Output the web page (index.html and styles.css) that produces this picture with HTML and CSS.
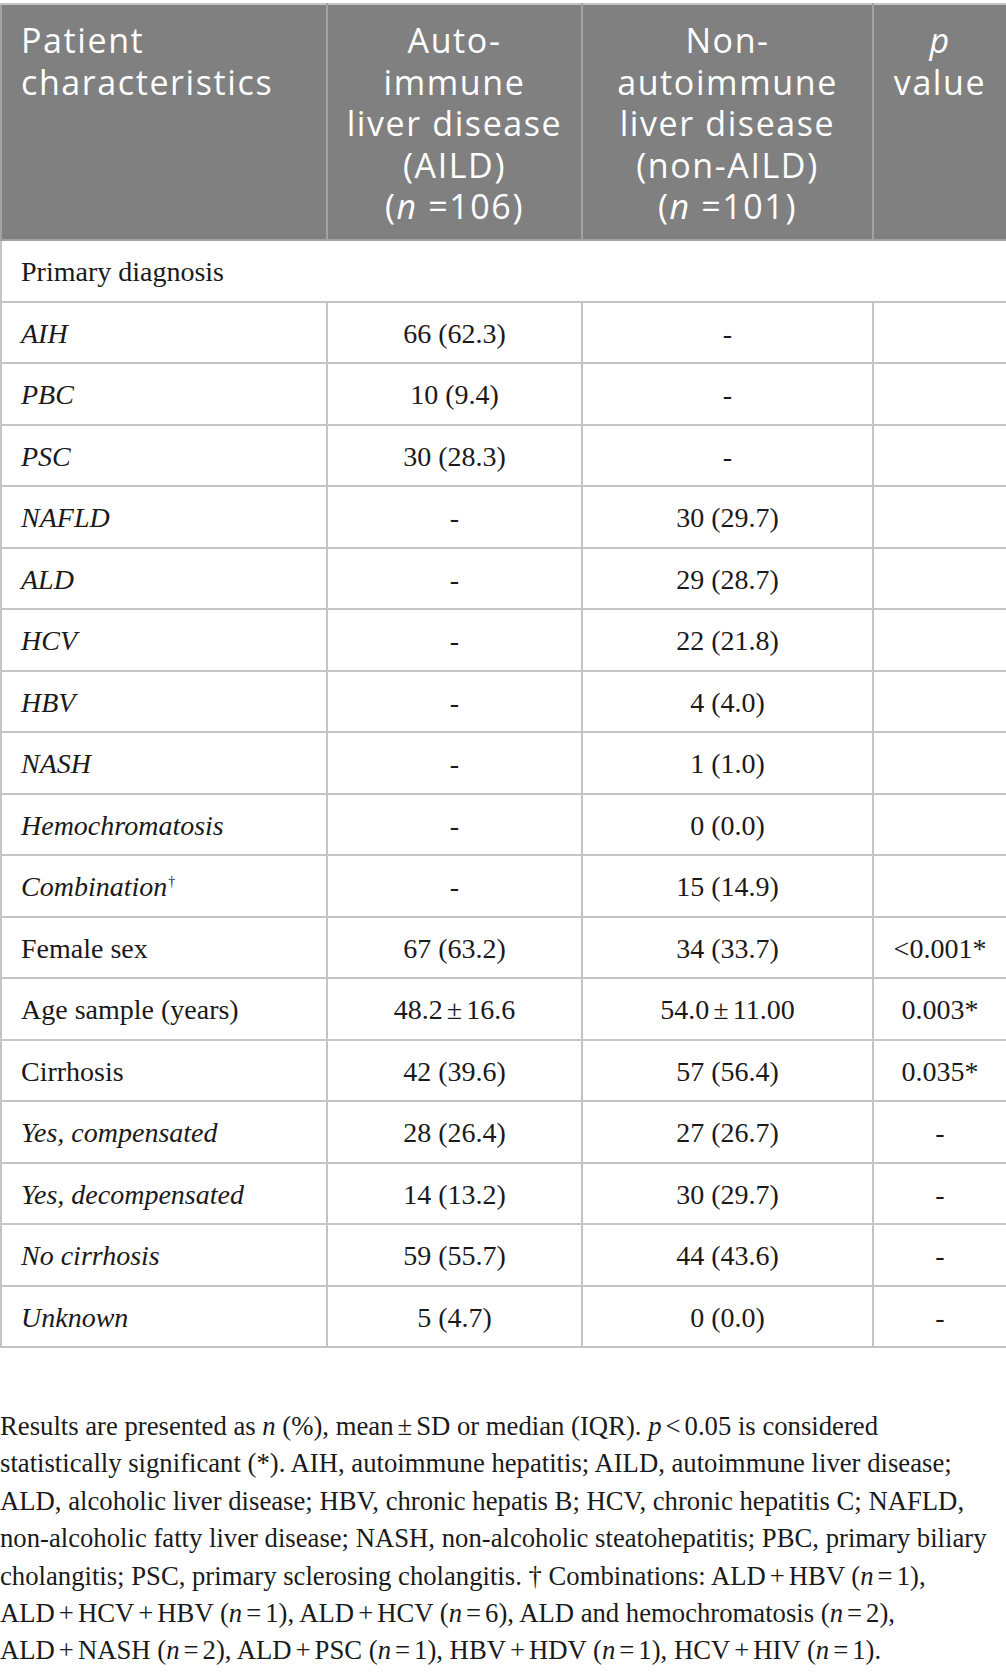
FILE: index.html
```html
<!DOCTYPE html>
<html>
<head>
<meta charset="utf-8">
<link rel="stylesheet" href="styles.css">
</head>
<body>
<div class="page">
<table class="tbl">
  <colgroup>
    <col class="w1"><col class="w2"><col class="w3"><col class="w4">
  </colgroup>
  <thead>
    <tr>
      <th class="h-left">Patient<br>characteristics</th>
      <th class="h-mid">Auto-<br>immune<br>liver disease<br>(AILD)<br>(<i>n</i> =106)</th>
      <th class="h-mid">Non-<br>autoimmune<br>liver disease<br>(non-AILD)<br>(<i>n</i> =101)</th>
      <th class="h-mid"><i>p</i><br>value</th>
    </tr>
  </thead>
  <tbody>
    <tr><td class="c-label" colspan="4">Primary diagnosis</td></tr>
    <tr><td class="c-label"><i>AIH</i></td><td>66 (62.3)</td><td>-</td><td></td></tr>
    <tr><td class="c-label"><i>PBC</i></td><td>10 (9.4)</td><td>-</td><td></td></tr>
    <tr><td class="c-label"><i>PSC</i></td><td>30 (28.3)</td><td>-</td><td></td></tr>
    <tr><td class="c-label"><i>NAFLD</i></td><td>-</td><td>30 (29.7)</td><td></td></tr>
    <tr><td class="c-label"><i>ALD</i></td><td>-</td><td>29 (28.7)</td><td></td></tr>
    <tr><td class="c-label"><i>HCV</i></td><td>-</td><td>22 (21.8)</td><td></td></tr>
    <tr><td class="c-label"><i>HBV</i></td><td>-</td><td>4 (4.0)</td><td></td></tr>
    <tr><td class="c-label"><i>NASH</i></td><td>-</td><td>1 (1.0)</td><td></td></tr>
    <tr><td class="c-label"><i>Hemochromatosis</i></td><td>-</td><td>0 (0.0)</td><td></td></tr>
    <tr><td class="c-label"><i>Combination</i><sup class="dag">†</sup></td><td>-</td><td>15 (14.9)</td><td></td></tr>
    <tr><td class="c-label">Female sex</td><td>67 (63.2)</td><td>34 (33.7)</td><td>&lt;0.001*</td></tr>
    <tr><td class="c-label">Age sample (years)</td><td>48.2<span class="o">±</span>16.6</td><td>54.0<span class="o">±</span>11.00</td><td>0.003*</td></tr>
    <tr><td class="c-label">Cirrhosis</td><td>42 (39.6)</td><td>57 (56.4)</td><td>0.035*</td></tr>
    <tr><td class="c-label"><i>Yes, compensated</i></td><td>28 (26.4)</td><td>27 (26.7)</td><td>-</td></tr>
    <tr><td class="c-label"><i>Yes, decompensated</i></td><td>14 (13.2)</td><td>30 (29.7)</td><td>-</td></tr>
    <tr><td class="c-label"><i>No cirrhosis</i></td><td>59 (55.7)</td><td>44 (43.6)</td><td>-</td></tr>
    <tr><td class="c-label"><i>Unknown</i></td><td>5 (4.7)</td><td>0 (0.0)</td><td>-</td></tr>
  </tbody>
</table>
<div class="note">
  <span class="ln">Results are presented as <i>n</i> (%), mean<span class="o">±</span>SD or median (IQR). <i>p</i><span class="o">&lt;</span>0.05 is considered</span>
  <span class="ln">statistically significant (*). AIH, autoimmune hepatitis; AILD, autoimmune liver disease;</span>
  <span class="ln">ALD, alcoholic liver disease; HBV, chronic hepatis B; HCV, chronic hepatitis C; NAFLD,</span>
  <span class="ln">non-alcoholic fatty liver disease; NASH, non-alcoholic steatohepatitis; PBC, primary biliary</span>
  <span class="ln">cholangitis; PSC, primary sclerosing cholangitis. † Combinations: ALD<span class="o">+</span>HBV (<i>n</i><span class="o">=</span>1),</span>
  <span class="ln">ALD<span class="o">+</span>HCV<span class="o">+</span>HBV (<i>n</i><span class="o">=</span>1), ALD<span class="o">+</span>HCV (<i>n</i><span class="o">=</span>6), ALD and hemochromatosis (<i>n</i><span class="o">=</span>2),</span>
  <span class="ln">ALD<span class="o">+</span>NASH (<i>n</i><span class="o">=</span>2), ALD<span class="o">+</span>PSC (<i>n</i><span class="o">=</span>1), HBV<span class="o">+</span>HDV (<i>n</i><span class="o">=</span>1), HCV<span class="o">+</span>HIV (<i>n</i><span class="o">=</span>1).</span>
</div>
</div>
</body>
</html>
```
FILE: styles.css
```css
html, body {
  margin: 0;
  padding: 0;
  background: #ffffff;
}
.page {
  width: 1006px;
  padding-top: 3px;
}
.tbl {
  width: 1006px;
  border-collapse: collapse;
  table-layout: fixed;
  font-family: "Liberation Serif", "Times New Roman", serif;
  font-size: 28px;
  color: #1a1a1a;
}
.w1 { width: 326px; }
.w2 { width: 255px; }
.w3 { width: 291px; }
.w4 { width: 134px; }
.tbl th {
  background: #7f807f;
  color: #ffffff;
  font-family: "Open Sans", "DejaVu Sans", sans-serif;
  font-weight: 400;
  font-size: 34px;
  letter-spacing: 1.6px;
  line-height: 41.5px;
  vertical-align: top;
  white-space: nowrap;
  padding: 15px 6px 11.5px;
  border: 2px solid #a3a3a3;
  border-top-color: #c4c4c4;
}
.tbl th.h-left {
  text-align: left;
  padding-left: 19px;
}
.h-mid { text-align: center; }
.tbl td {
  border: 2px solid #c4c4c4;
  text-align: center;
  vertical-align: middle;
  line-height: 32px;
  padding: 15px 6px 12.5px;
  white-space: nowrap;
}
.tbl td.c-label {
  text-align: left;
  padding-left: 19px;
}
.o {
  margin: 0 4px;
}
.dag {
  font-size: 14px;
  vertical-align: super;
  line-height: 0;
  margin-left: 1px;
}
.note {
  margin-top: 60px;
  font-family: "Liberation Serif", "Times New Roman", serif;
  font-size: 26.7px;
  line-height: 37.4px;
  color: #1a1a1a;
}
.note .ln {
  display: block;
  white-space: nowrap;
}
```
